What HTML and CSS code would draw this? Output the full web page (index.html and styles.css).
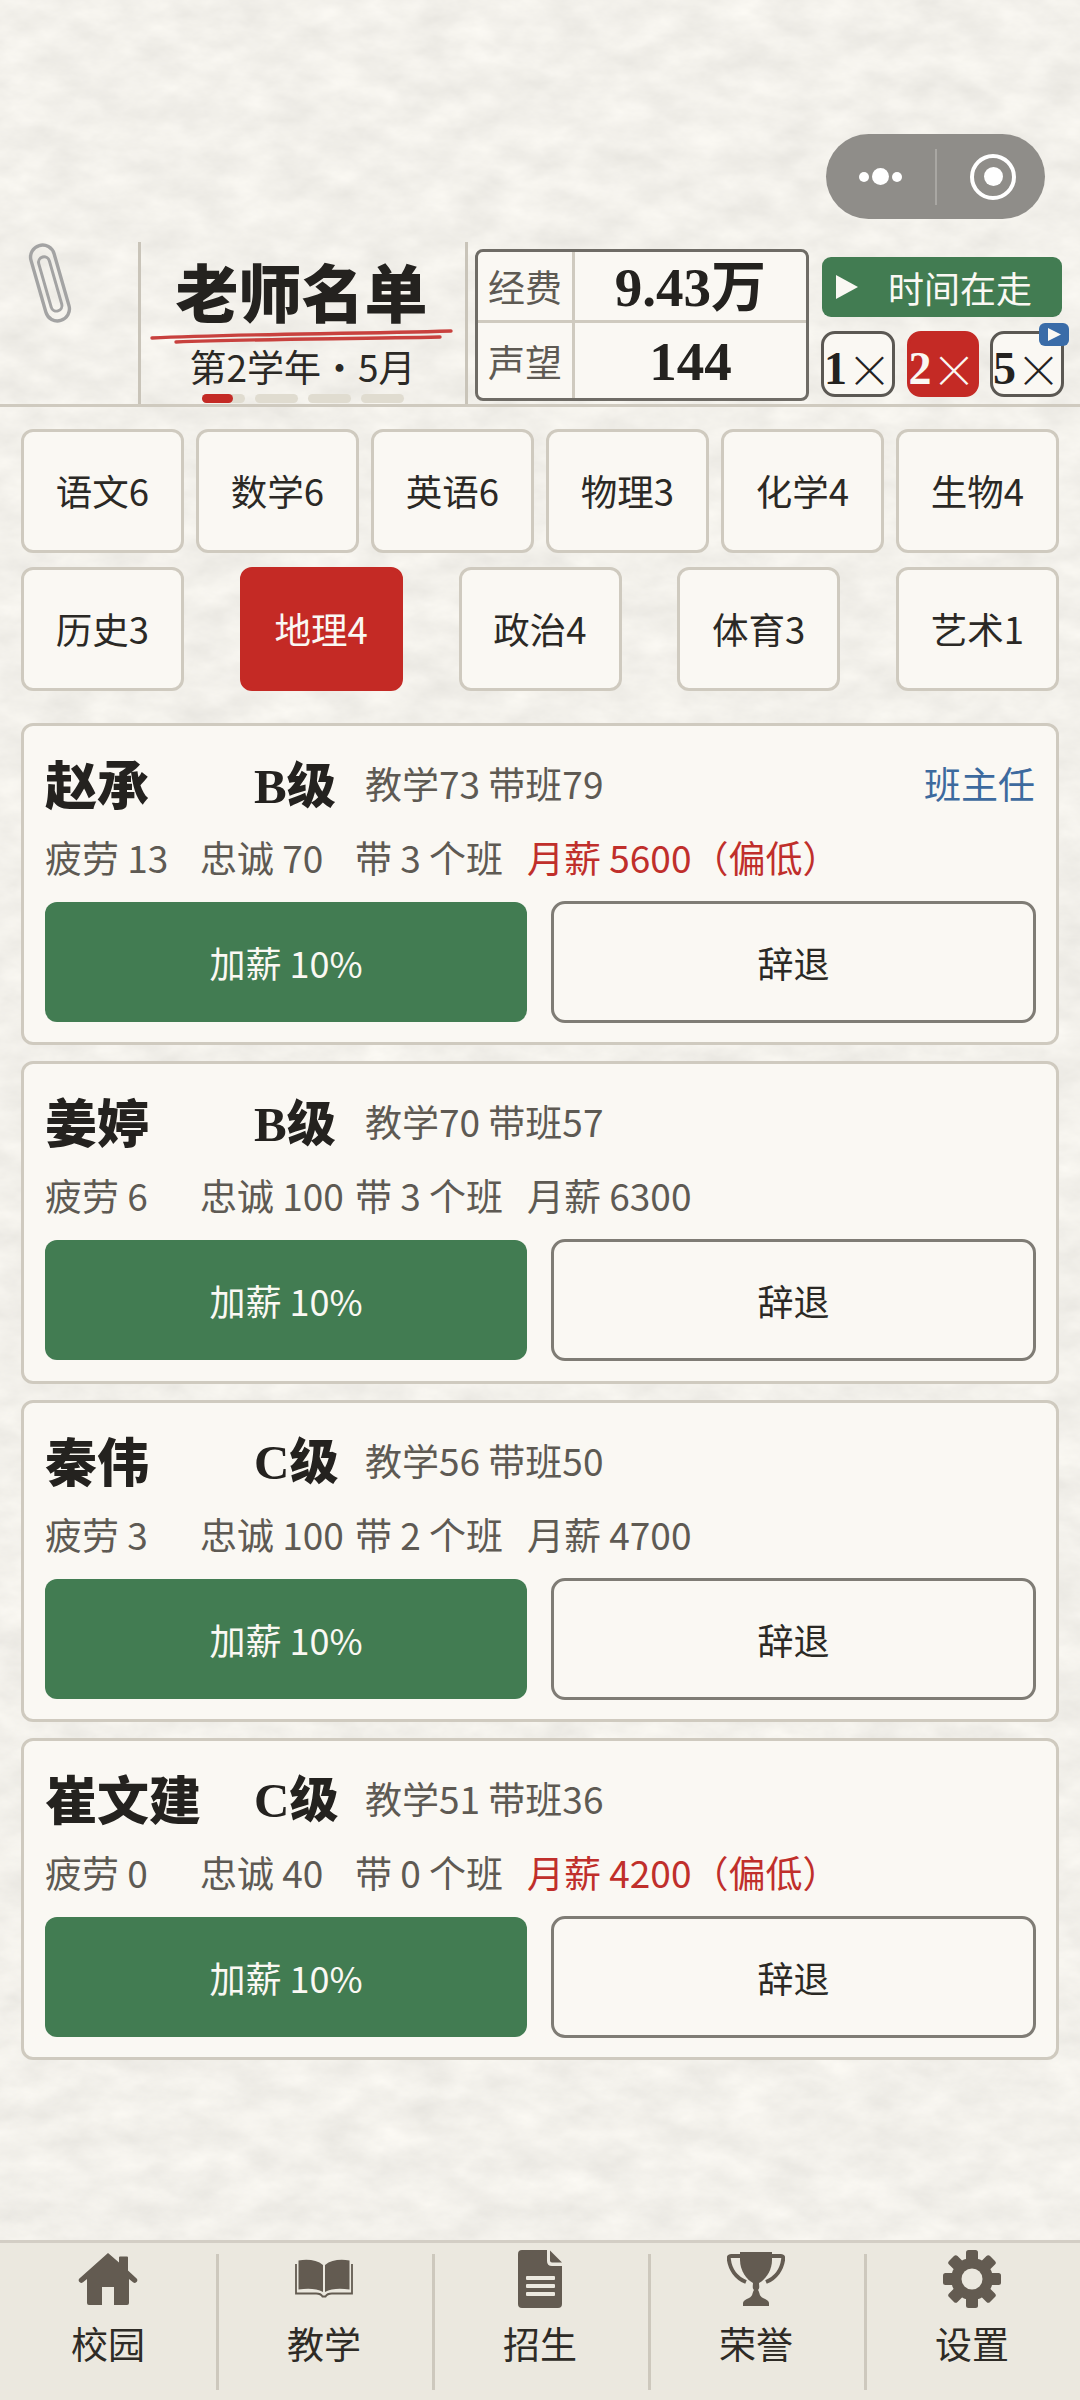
FILE: index.html
```html
<!DOCTYPE html>
<html lang="zh-CN">
<head>
<meta charset="utf-8">
<title>老师名单</title>
<link rel="stylesheet" href="styles.css">
</head>
<body>
<div class="page">
  <svg class="paper" aria-hidden="true">
    <filter id="paper-noise" x="0" y="0" width="100%" height="100%" color-interpolation-filters="sRGB">
      <feTurbulence type="fractalNoise" baseFrequency="0.022 0.04" numOctaves="5" seed="7"/>
      <feColorMatrix type="matrix" values="0.09 0 0 0 0.905  0.09 0 0 0 0.897  0.09 0 0 0 0.875  0 0 0 0 1"/>
    </filter>
    <rect width="100%" height="100%" filter="url(#paper-noise)"/>
  </svg>

  <div class="capsule">
    <div class="capsule-dots"><i class="dot"></i><i class="dot dot-big"></i><i class="dot"></i></div>
    <i class="capsule-sep"></i>
    <div class="capsule-ring"><i></i></div>
  </div>

  <header class="header">
    <div class="clip-cell">
      <svg class="clip" width="44" height="82" viewBox="0 0 44 82" fill="none" stroke="#a3a3a3" stroke-width="3.4">
        <g transform="rotate(-16 22 41)">
          <rect x="10" y="2" width="24" height="78" rx="12"/>
          <rect x="16.5" y="14" width="11" height="56" rx="5.5" stroke-width="3"/>
        </g>
      </svg>
    </div>
    <div class="title-cell">
      <h1 class="title">老师名单</h1>
      <svg class="scribble" width="304" height="16" viewBox="0 0 304 16" fill="none" stroke="#c8413e" stroke-linecap="round">
        <path d="M2 9 C80 5 200 5 301 2" stroke-width="3.4"/>
        <path d="M26 13 C100 10 200 10 290 8" stroke-width="3.4"/>
      </svg>
      <div class="term">第2学年・5月</div>
      <div class="pills">
        <span class="pill pill-on"><i></i></span>
        <span class="pill"></span>
        <span class="pill"></span>
        <span class="pill"></span>
      </div>
    </div>
    <div class="stats">
      <div class="stat-label">经费</div>
      <div class="stat-value">9.43万</div>
      <div class="stat-label stat-last">声望</div>
      <div class="stat-value stat-last">144</div>
    </div>
    <div class="controls">
      <button class="run">
        <svg width="22" height="24" viewBox="0 0 22 24"><polygon points="0,0 22,12 0,24" fill="#faf8f3"/></svg>
        <span>时间在走</span>
      </button>
      <div class="speeds">
        <div class="speed"><b>1</b><span>×</span></div>
        <div class="speed speed-on"><b>2</b><span>×</span></div>
        <div class="speed">
          <b>5</b><span>×</span>
          <div class="ad-badge"><svg width="13" height="13" viewBox="0 0 13 13"><polygon points="0,0 13,6.5 0,13" fill="#faf8f3"/></svg></div>
        </div>
      </div>
    </div>
  </header>

  <nav class="subjects">
    <div class="subject-row">
      <div class="subject">语文6</div>
      <div class="subject">数学6</div>
      <div class="subject">英语6</div>
      <div class="subject">物理3</div>
      <div class="subject">化学4</div>
      <div class="subject">生物4</div>
    </div>
    <div class="subject-row">
      <div class="subject">历史3</div>
      <div class="subject subject-on">地理4</div>
      <div class="subject">政治4</div>
      <div class="subject">体育3</div>
      <div class="subject">艺术1</div>
    </div>
  </nav>

  <main class="cards">
    <article class="card">
      <div class="card-head">
        <span class="name">赵承</span>
        <span class="grade"><b>B</b>级</span>
        <span class="skill">教学73 带班79</span>
        <span class="role">班主任</span>
      </div>
      <div class="card-meta">
        <span class="m1">疲劳 13</span><span class="m2">忠诚 70</span><span class="m3">带 3 个班</span><span class="low">月薪 5600（偏低）</span>
      </div>
      <div class="card-actions"><button class="raise">加薪 10%</button><button class="fire">辞退</button></div>
    </article>
    <article class="card">
      <div class="card-head">
        <span class="name">姜婷</span>
        <span class="grade"><b>B</b>级</span>
        <span class="skill">教学70 带班57</span>
      </div>
      <div class="card-meta">
        <span class="m1">疲劳 6</span><span class="m2">忠诚 100</span><span class="m3">带 3 个班</span><span>月薪 6300</span>
      </div>
      <div class="card-actions"><button class="raise">加薪 10%</button><button class="fire">辞退</button></div>
    </article>
    <article class="card">
      <div class="card-head">
        <span class="name">秦伟</span>
        <span class="grade"><b>C</b>级</span>
        <span class="skill">教学56 带班50</span>
      </div>
      <div class="card-meta">
        <span class="m1">疲劳 3</span><span class="m2">忠诚 100</span><span class="m3">带 2 个班</span><span>月薪 4700</span>
      </div>
      <div class="card-actions"><button class="raise">加薪 10%</button><button class="fire">辞退</button></div>
    </article>
    <article class="card">
      <div class="card-head">
        <span class="name">崔文建</span>
        <span class="grade"><b>C</b>级</span>
        <span class="skill">教学51 带班36</span>
      </div>
      <div class="card-meta">
        <span class="m1">疲劳 0</span><span class="m2">忠诚 40</span><span class="m3">带 0 个班</span><span class="low">月薪 4200（偏低）</span>
      </div>
      <div class="card-actions"><button class="raise">加薪 10%</button><button class="fire">辞退</button></div>
    </article>
  </main>

  <footer class="tabbar">
    <div class="tab">
      <div class="tab-icon">
        <svg width="60" height="60" viewBox="0 0 60 60" fill="#635b51"><path d="M30 4 L41 13.5 V8.5 Q41 7.5 42 7.5 H49 Q50 7.5 50 8.5 V21.5 L58.6 29.5 Q60 31 58.8 32.8 Q57.2 34.8 55 33.2 L51 30 V54 Q51 56 49 56 H36 V38 H24 V56 H11 Q9 56 9 54 V30 L5 33.2 Q2.8 34.8 1.2 32.8 Q0 31 1.4 29.5 Z"/></svg>
      </div>
      <span>校园</span>
    </div>
    <div class="tab">
      <div class="tab-icon">
        <svg width="58" height="40" viewBox="0 0 58 40" fill="#635b51"><path d="M3.5 1.5 C13 0 22 1 28 6 V33 C22 29.500 13 29 3.500 30.500 Z"/><path d="M54.500 1.500 C45 0 36 1 30 6 V33 C36 29.500 45 29 54.500 30.500 Z"/><path d="M1 5 V34.500 H21 Q26 34.500 27.500 37.500 H30.500 Q32 34.500 37 34.500 H57 V5" fill="none" stroke="#635b51" stroke-width="1.800"/></svg>
      </div>
      <span>教学</span>
    </div>
    <div class="tab">
      <div class="tab-icon">
        <svg width="44" height="58" viewBox="0 0 44 58" fill="#635b51"><path d="M4 0 H29 V11 Q29 16 34 16 H44 V54 Q44 58 40 58 H4 Q0 58 0 54 V4 Q0 0 4 0 Z"/><path d="M32 0.500 L44 12.500 H34 Q32 12.500 32 10.500 Z"/><rect x="8" y="26" width="29" height="4" rx="1" fill="#ebe8df"/><rect x="8" y="34" width="29" height="4" rx="1" fill="#ebe8df"/><rect x="8" y="42" width="29" height="4" rx="1" fill="#ebe8df"/></svg>
      </div>
      <span>招生</span>
    </div>
    <div class="tab">
      <div class="tab-icon">
        <svg width="58" height="56" viewBox="0 0 58 56" fill="#635b51"><path d="M13 1 H45 V9 C45 20 38 29 32 32 H26 C20 29 13 20 13 9 Z"/><path d="M14 5 H4 Q1.500 5 1.800 8 C3 18 9 27 19 31 M44 5 H54 Q56.500 5 56.200 8 C55 18 49 27 39 31" fill="none" stroke="#635b51" stroke-width="4"/><path d="M26 31 C26 35 25 37 27 39 C25 42 26 45 22 47 C18 49 16 50 16 52 V55 H42 V52 C42 50 40 49 36 47 C32 45 33 42 31 39 C33 37 32 35 32 31 Z"/></svg>
      </div>
      <span>荣誉</span>
    </div>
    <div class="tab">
      <div class="tab-icon">
        <svg width="58" height="58" viewBox="0 0 58 58" fill="#635b51"><g><rect x="23" y="0" width="12" height="58" rx="2.500"/><rect x="23" y="0" width="12" height="58" rx="2.500" transform="rotate(45 29 29)"/><rect x="23" y="0" width="12" height="58" rx="2.500" transform="rotate(90 29 29)"/><rect x="23" y="0" width="12" height="58" rx="2.500" transform="rotate(135 29 29)"/></g><circle cx="29" cy="29" r="21"/><circle cx="29" cy="29" r="10.500" fill="#ebe8df"/></svg>
      </div>
      <span>设置</span>
    </div>
  </footer>
</div>
</body>
</html>
```

FILE: styles.css
```css
* { box-sizing: border-box; }
html, body { margin: 0; padding: 0; }
body {
  font-family: "Noto Sans CJK SC", "Noto Sans", sans-serif;
  color: #2b2925;
  background: #f3f1eb;
}
i { display: block; font-style: normal; }
button { font: inherit; padding: 0; margin: 0; }

.page {
  position: relative;
  width: 1080px;
  height: 2400px;
  padding-top: 242px;
  display: flex;
  flex-direction: column;
  overflow: hidden;
}
.paper {
  position: absolute;
  left: 0;
  top: 0;
  width: 1080px;
  height: 2400px;
  z-index: -1;
}

/* capsule menu */
.capsule {
  position: absolute;
  left: 826px;
  top: 134px;
  width: 219px;
  height: 85px;
  border-radius: 43px;
  background: #8f8d89;
  display: flex;
  align-items: center;
}
.capsule-dots {
  width: 109px;
  display: flex;
  justify-content: center;
  align-items: center;
  gap: 3px;
}
.dot { width: 10px; height: 10px; border-radius: 50%; background: #fff; }
.dot-big { width: 17px; height: 17px; }
.capsule-sep { width: 2px; height: 56px; background: #a9a7a3; }
.capsule-ring {
  margin-left: 33px;
  width: 46px;
  height: 46px;
  border: 4px solid #fff;
  border-radius: 50%;
  display: flex;
  align-items: center;
  justify-content: center;
}
.capsule-ring i { width: 19px; height: 19px; border-radius: 50%; background: #fff; }

/* header */
.header {
  display: flex;
  height: 165px;
  border-bottom: 3px solid #cfcabf;
}
.clip-cell {
  width: 141px;
  border-right: 3px solid #c9c4b9;
  padding-left: 28px;
}
.clip { display: block; }
.title-cell {
  width: 327px;
  border-right: 3px solid #c9c4b9;
  display: flex;
  flex-direction: column;
  align-items: center;
  padding-top: 17px;
}
.title {
  margin: 0 3px 0 0;
  font-size: 63px;
  line-height: 62px;
  font-weight: 900;
  color: #24221f;
  white-space: nowrap;
}
.scribble { display: block; margin: 8px 3px 0 0; flex: none; }
.term { font-size: 37px; line-height: 40px; color: #2b2925; margin: 1px 1px 0 0; white-space: nowrap; }
.pills { display: flex; gap: 10px; margin-top: 8px; }
.pill { display: block; width: 43px; height: 9px; border-radius: 5px; background: #e0dcd0; }
.pill-on i { width: 31px; height: 9px; border-radius: 5px; background: #c42a25; }

.stats {
  width: 334px;
  height: 152px;
  margin: 7px 0 0 7px;
  border: 3px solid #6f6c66;
  border-radius: 8px;
  background: #faf8f3;
  display: grid;
  grid-template-columns: 97px 1fr;
  grid-template-rows: 71px 1fr;
}
.stat-label {
  display: flex;
  align-items: center;
  justify-content: center;
  font-size: 37px;
  color: #5e5a53;
  border-right: 3px solid #cfcabf;
  border-bottom: 3px solid #cfcabf;
}
.stat-value {
  display: flex;
  align-items: center;
  justify-content: center;
  padding-top: 3px;
  font-family: "Liberation Serif", "Noto Sans CJK SC", serif;
  font-weight: 700;
  font-size: 55px;
  line-height: 60px;
  color: #24221f;
  border-bottom: 3px solid #cfcabf;
}
.stat-last { border-bottom: 0; }

.controls {
  width: 243px;
  margin-left: 12px;
  padding-top: 15px;
}
.run {
  display: flex;
  align-items: center;
  width: 240px;
  height: 60px;
  margin-left: 1px;
  padding-left: 14px;
  gap: 30px;
  border: 0;
  border-radius: 9px;
  background: #427c52;
  color: #faf8f3;
  font-size: 36px;
  line-height: 60px;
}
.speeds { display: flex; justify-content: space-between; margin-top: 14px; }
.speed {
  position: relative;
  width: 74px;
  height: 66px;
  border: 3px solid #5b5853;
  border-radius: 14px;
  background: #faf8f3;
  display: flex;
  align-items: center;
  justify-content: center;
  gap: 0;
  padding-top: 9px;
  color: #24221f;
}
.speed b {
  font-family: "Liberation Serif", serif;
  font-weight: 700;
  font-size: 46px;
  line-height: 48px;
}
.speed span { font-size: 45px; line-height: 48px; font-weight: 300; }
.speed-on { width: 72px; background: #c42a25; border-color: #c42a25; color: #faf8f3; }
.ad-badge {
  position: absolute;
  right: -8px;
  top: -11px;
  width: 30px;
  height: 23px;
  border-radius: 6px;
  background: #3a6ca8;
  display: flex;
  align-items: center;
  justify-content: center;
}

/* subjects */
.subjects {
  padding: 22px 21px 0;
  display: flex;
  flex-direction: column;
  gap: 14px;
}
.subject-row { display: flex; justify-content: space-between; }
.subject {
  width: 163px;
  height: 124px;
  border: 3px solid #cfcabf;
  border-radius: 12px;
  background: #faf8f3;
  display: flex;
  align-items: center;
  justify-content: center;
  font-size: 36.5px;
  padding-bottom: 2px;
}
.subject-on { background: #c42a25; border-color: #c42a25; color: #faf8f3; }

/* cards */
.cards {
  padding: 32px 21px 0;
  display: flex;
  flex-direction: column;
  gap: 16px;
}
.card {
  height: 322.33px;
  border: 3px solid #cfcabf;
  border-radius: 12px;
  background: #faf8f3;
  padding: 27px 20px 0 21px;
}
.card-head {
  display: flex;
  align-items: center;
  height: 60px;
  white-space: nowrap;
}
.name { width: 209px; font-size: 52px; line-height: 60px; font-weight: 900; color: #24221f; }
.grade { width: 111px; padding-top: 2px; font-size: 49px; line-height: 60px; font-weight: 900; color: #24221f; }
.grade b { font-family: "Liberation Serif", serif; font-weight: 700; }
.skill { font-size: 37px; color: #5e5a53; }
.role { margin: 0 1px 0 auto; font-size: 37px; color: #3d6a9e; }
.card-meta {
  display: flex;
  height: 44px;
  margin-top: 22px;
  font-size: 37px;
  line-height: 44px;
  color: #5e5a53;
  white-space: nowrap;
}
.m1 { width: 155px; }
.m2 { width: 155px; }
.m3 { width: 172px; }
.low { color: #c02f2b; }
.card-actions {
  display: grid;
  grid-template-columns: 482px 485px;
  column-gap: 24px;
  align-items: center;
  margin-top: 22px;
}
.raise {
  height: 120px;
  border: 0;
  border-radius: 12px;
  background: #427c52;
  color: #faf8f3;
  font-size: 36px;
}
.fire {
  height: 122px;
  border: 3px solid #7f7c75;
  border-radius: 14px;
  background: #faf8f3;
  color: #2b2925;
  font-size: 36px;
}

/* tab bar */
.tabbar {
  margin-top: auto;
  height: 160px;
  background: #ebe8df;
  border-top: 3px solid #d3cec5;
  display: flex;
  padding-top: 11px;
}
.tab {
  width: 216px;
  height: 136px;
  display: flex;
  flex-direction: column;
  align-items: center;
  font-size: 37px;
  color: #2e2b26;
}
.tab + .tab { border-left: 3px solid #cdc8bd; padding-right: 3px; }
.tab-icon {
  height: 60px;
  display: flex;
  align-items: center;
  justify-content: center;
  margin-top: -5px;
}
.tab span { line-height: 44px; margin-top: 12px; }
```
